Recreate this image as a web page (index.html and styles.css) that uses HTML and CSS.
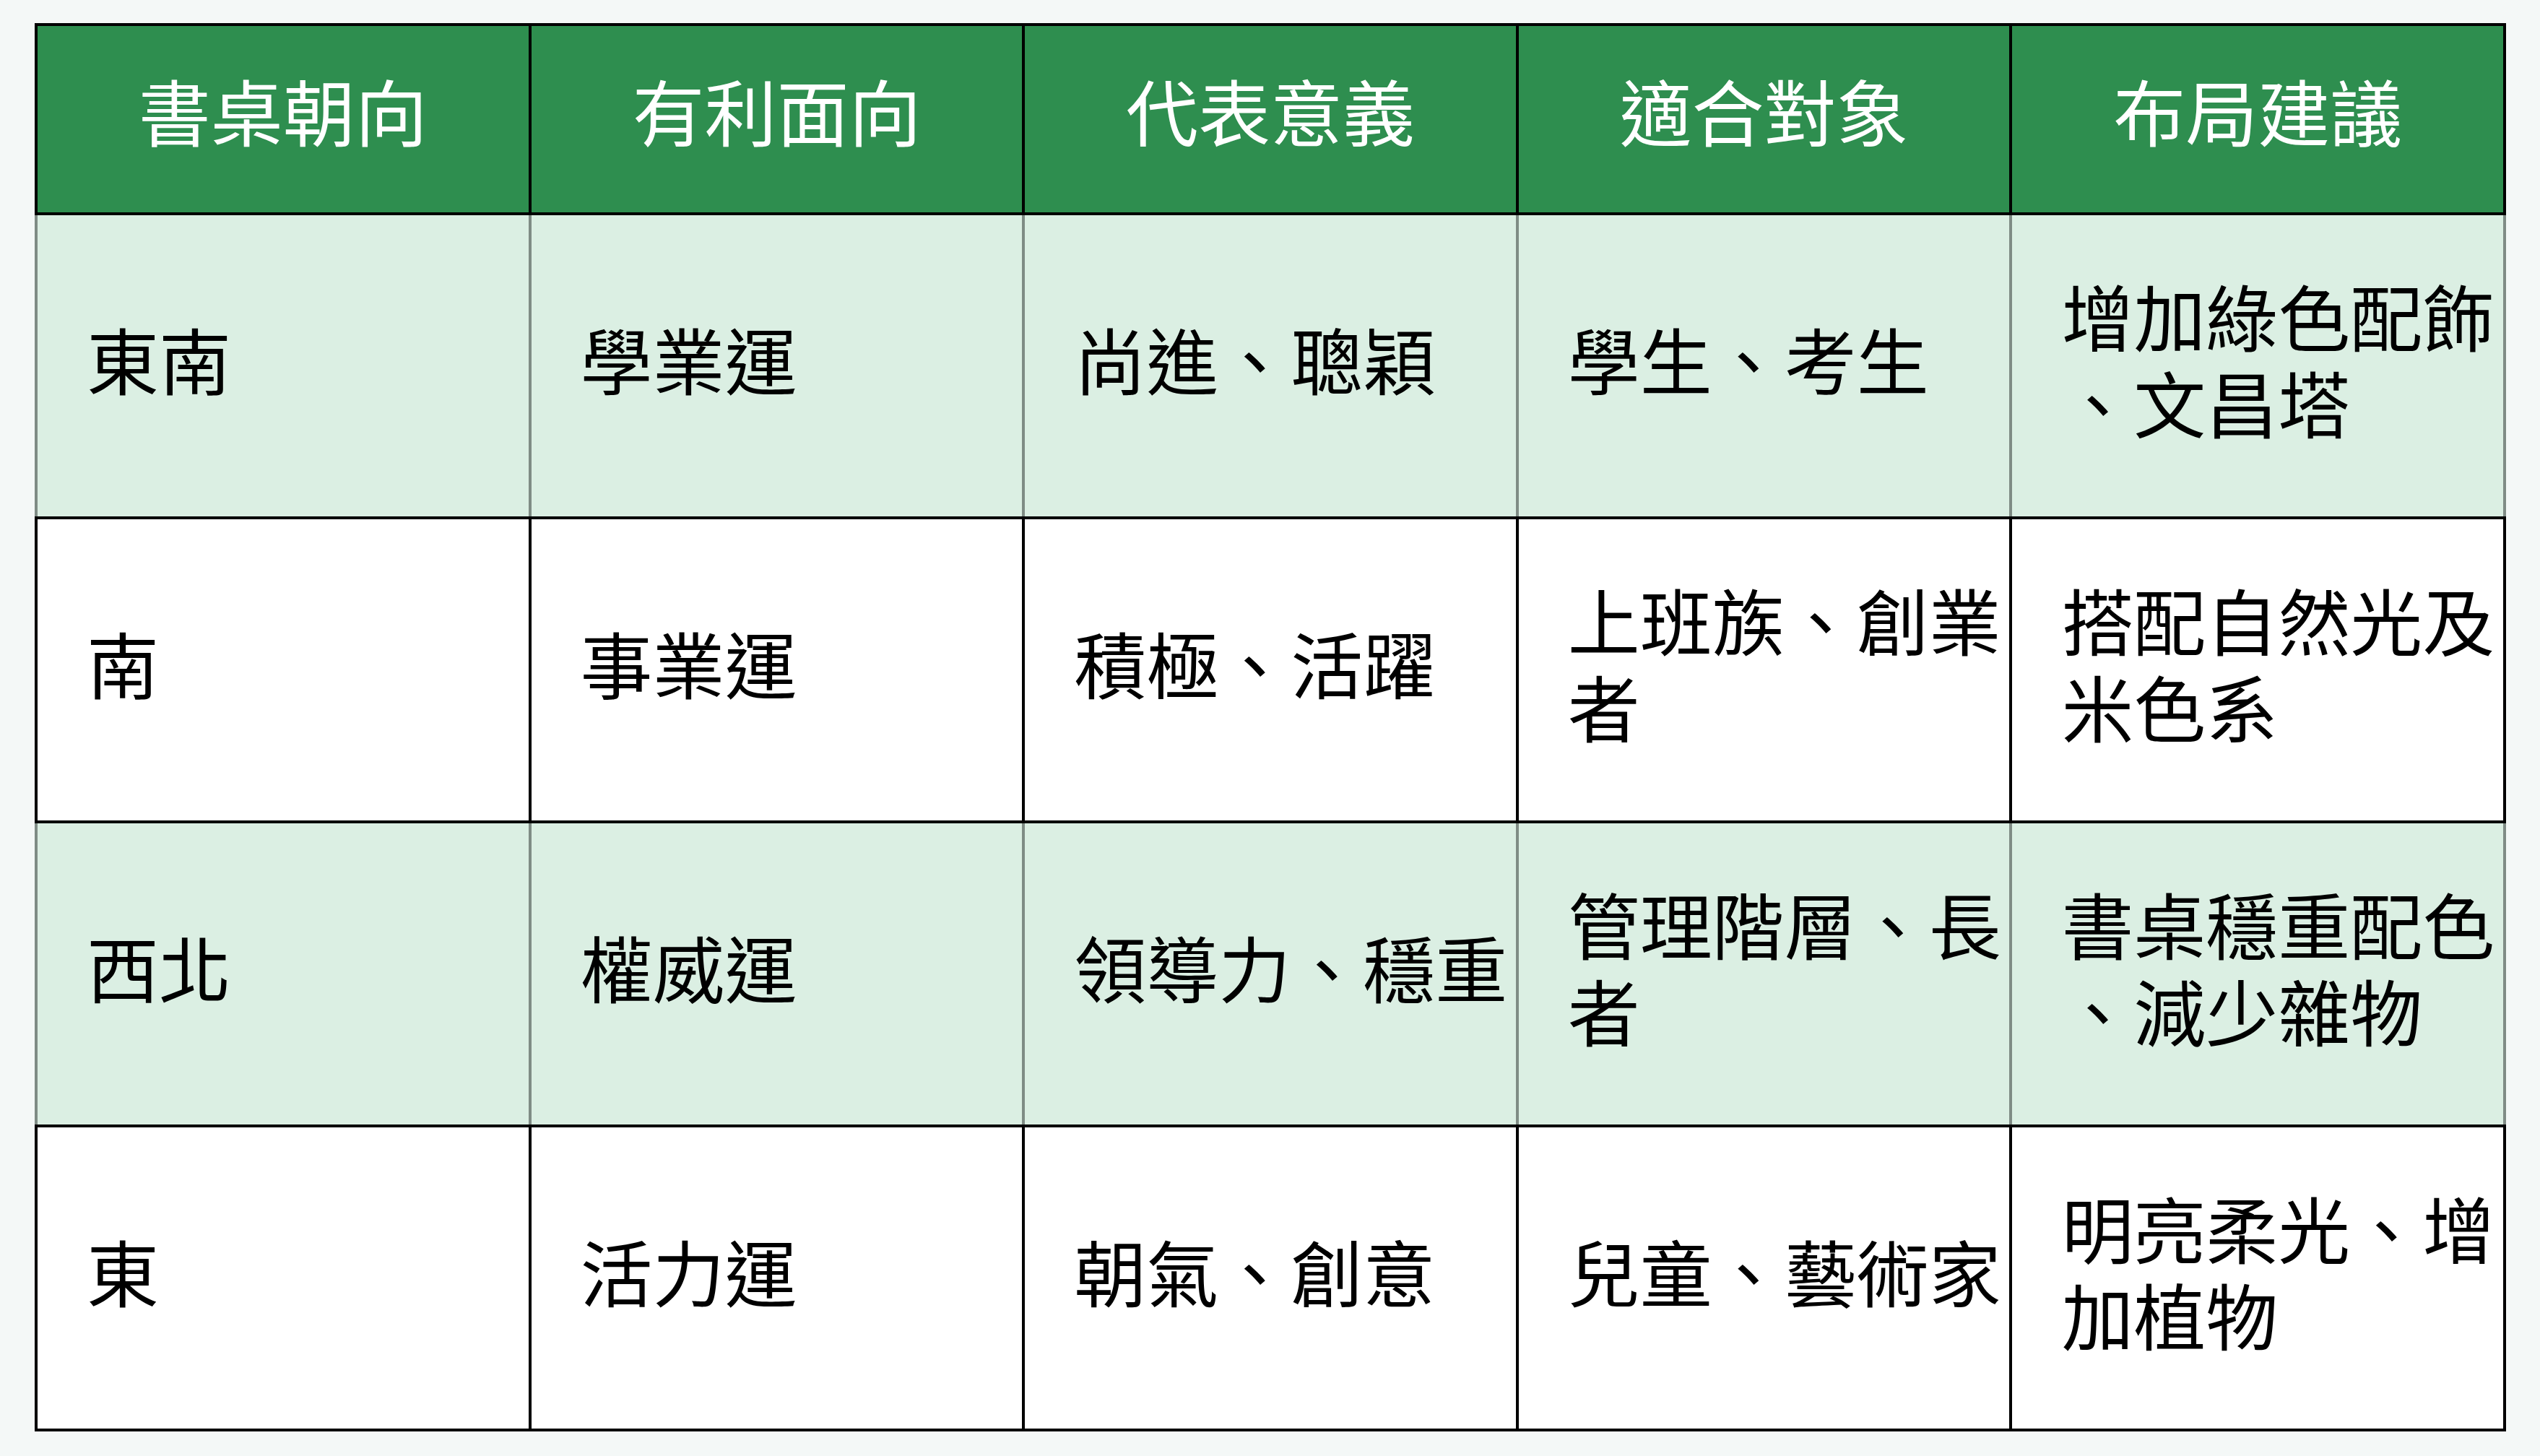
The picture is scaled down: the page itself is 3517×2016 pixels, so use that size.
FILE: index.html
```html
<!DOCTYPE html>
<html lang="zh-Hant">
<head>
<meta charset="utf-8">
<title>書桌朝向</title>
<link rel="stylesheet" href="styles.css">
</head>
<body>
<table class="fs-table">
  <colgroup>
    <col class="col"><col class="col"><col class="col"><col class="col"><col class="col">
  </colgroup>
  <thead>
    <tr class="head-row">
      <th>書桌朝向</th>
      <th>有利面向</th>
      <th>代表意義</th>
      <th>適合對象</th>
      <th>布局建議</th>
    </tr>
  </thead>
  <tbody>
    <tr class="row row-alt">
      <td>東南</td>
      <td>學業運</td>
      <td>尚進、聰穎</td>
      <td>學生、考生</td>
      <td>增加綠色配飾、文昌塔</td>
    </tr>
    <tr class="row">
      <td>南</td>
      <td>事業運</td>
      <td>積極、活躍</td>
      <td>上班族、創業者</td>
      <td>搭配自然光及米色系</td>
    </tr>
    <tr class="row row-alt">
      <td>西北</td>
      <td>權威運</td>
      <td>領導力、穩重</td>
      <td>管理階層、長者</td>
      <td>書桌穩重配色、減少雜物</td>
    </tr>
    <tr class="row">
      <td>東</td>
      <td>活力運</td>
      <td>朝氣、創意</td>
      <td>兒童、藝術家</td>
      <td>明亮柔光、增加植物</td>
    </tr>
  </tbody>
</table>
</body>
</html>
```

FILE: styles.css
```css
html, body {
  margin: 0;
  padding: 0;
  background: #f4f8f7;
}

body {
  padding: 32px 48px;
  font-family: "Noto Sans CJK TC", "Noto Sans CJK SC", "Noto Sans", sans-serif;
}

.fs-table {
  width: 3422px;
  table-layout: fixed;
  border-collapse: collapse;
  border: 4px solid #000;
}

.col {
  width: 20%;
}

.head-row {
  height: 262px;
  background: #2e8e4f;
}

.head-row th {
  border: 4px solid #000;
  color: #ffffff;
  font-size: 100px;
  font-weight: 400;
  line-height: 1.2;
  text-align: center;
  vertical-align: middle;
  padding: 0 8px 26px 8px;
}

.row {
  height: 421px;
  background: #ffffff;
}

.row-alt {
  background: #dbefe3;
}

.row td {
  border: 4px solid #000;
  color: #000;
  font-size: 100px;
  font-weight: 400;
  line-height: 1.2;
  text-align: left;
  vertical-align: middle;
  padding: 0 4px 22px 68px;
  line-break: anywhere;
}

.row-alt td {
  border-left-color: #7f8c85;
  border-right-color: #7f8c85;
}
```
